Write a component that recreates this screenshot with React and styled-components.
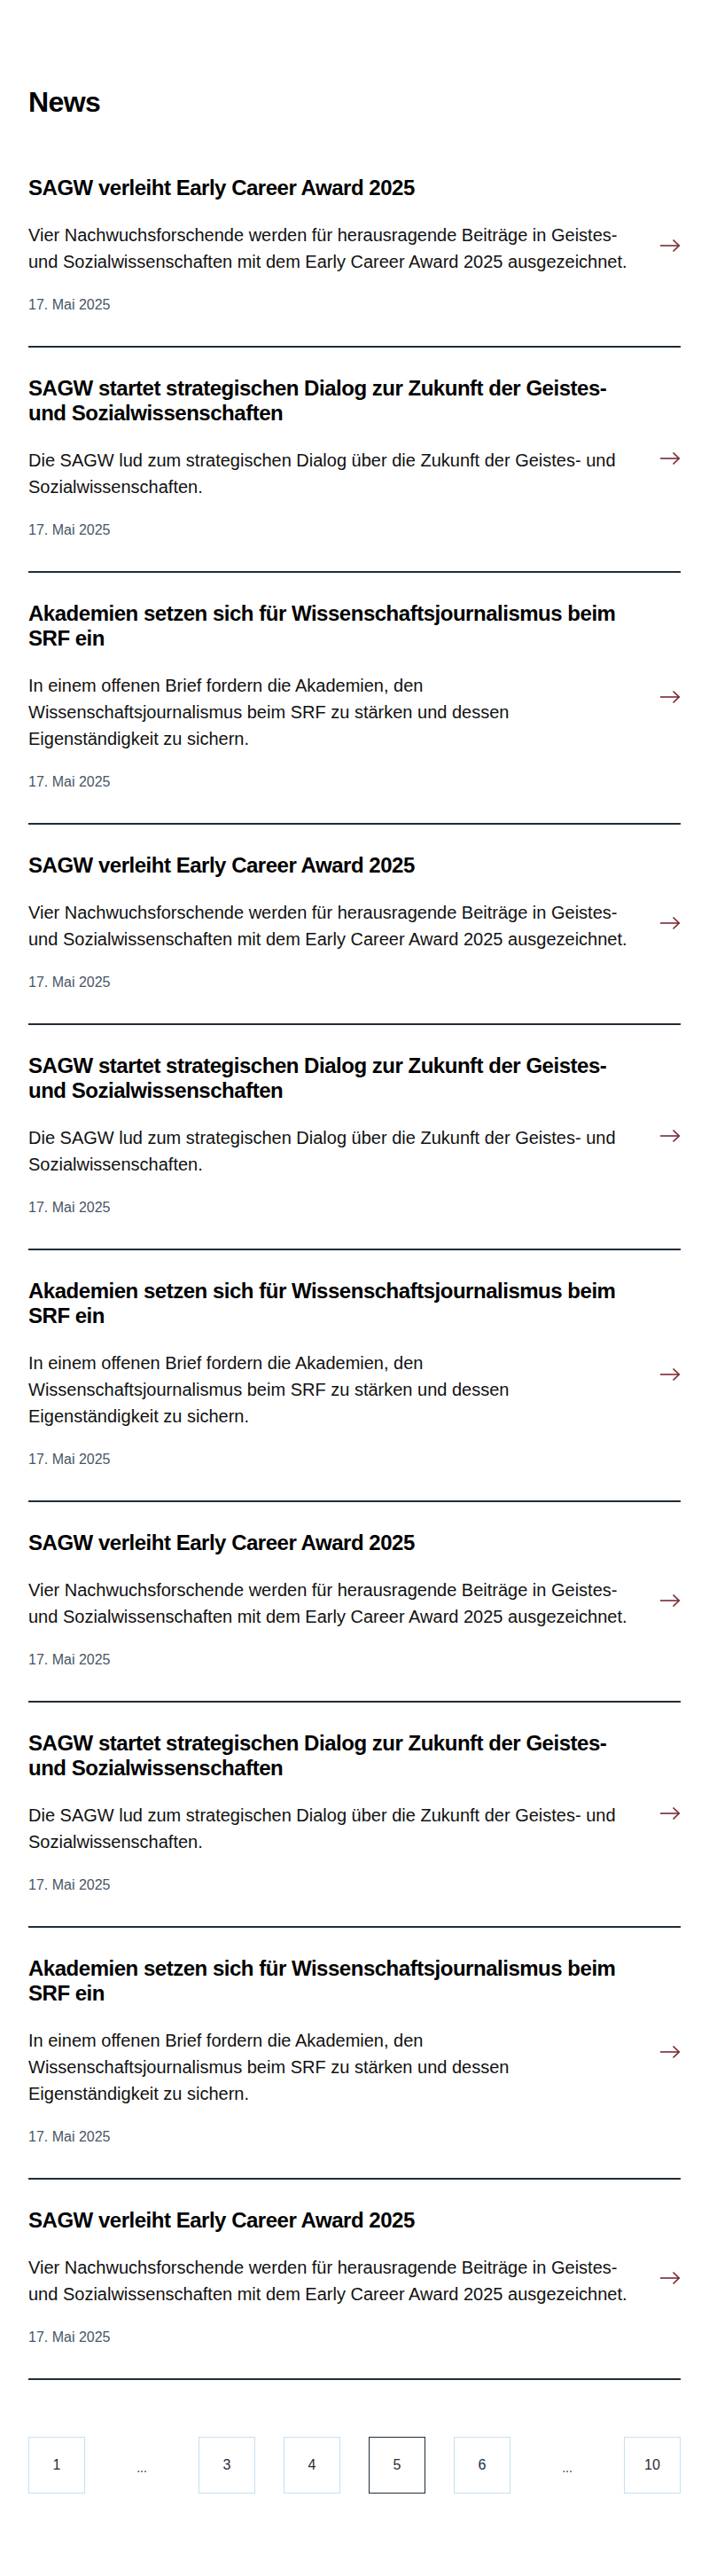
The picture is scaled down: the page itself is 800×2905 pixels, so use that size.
import React from "react";
import styled, { createGlobalStyle } from "styled-components";

const Global = createGlobalStyle`
  html, body { margin: 0; padding: 0; background: #fff; }
  body { font-family: "Liberation Sans", Arial, sans-serif; color: #111; }
  * { box-sizing: border-box; }
`;

const Page = styled.main`
  padding: 96px 32px 96px;
`;

const Heading = styled.h1`
  margin: 0 0 32px;
  font-size: 32px;
  line-height: 1.2;
  font-weight: 700;
  letter-spacing: -0.02em;
  color: #000;
`;

const List = styled.ul`
  list-style: none;
  margin: 0;
  padding: 0;
`;

const Item = styled.li`
  display: flex;
  align-items: center;
  gap: 32px;
  padding: 32px 0 34px;
  border-bottom: 2px solid #1f2d3a;
`;

const Content = styled.div`
  flex: 1;
  min-width: 0;
  display: flex;
  flex-direction: column;
`;

const Title = styled.h2`
  margin: 0 0 24px;
  font-size: 24px;
  line-height: 28px;
  font-weight: 700;
  letter-spacing: -0.02em;
  color: #000;
`;

const Teaser = styled.p`
  margin: 0 0 22px;
  font-size: 20px;
  line-height: 30px;
  color: #111;
`;

const DateText = styled.time`
  font-size: 16px;
  line-height: 24px;
  color: #4a5565;
`;

const ArrowBox = styled.span`
  flex: 0 0 24px;
  width: 24px;
  height: 16px;
  display: flex;
  align-items: center;
  color: #7a2832;
`;

const Pagination = styled.nav`
  margin-top: 64px;
  display: flex;
  gap: 32px;
`;

const PageBox = styled.span`
  width: 64px;
  height: 64px;
  display: flex;
  align-items: center;
  justify-content: center;
  font-size: 16px;
  color: #1f2d3a;
  border: 1px solid ${(p) => (p.$active ? "#1f2d3a" : "#c6e0ef")};
`;

const Dots = styled.span`
  width: 64px;
  height: 64px;
  display: flex;
  align-items: center;
  justify-content: center;
  font-size: 14px;
  color: #1f2d3a;
  padding-top: 6px;
`;

const Arrow = () => (
  <svg width="24" height="16" viewBox="0 0 24 16" fill="none" stroke="currentColor" strokeWidth="1.6">
    <path d="M1 8h21.5" />
    <path d="M15.5 1.5 22.2 8l-6.7 6.5" />
  </svg>
);

const items = [
  {
    title: "SAGW verleiht Early Career Award 2025",
    text: "Vier Nachwuchsforschende werden für herausragende Beiträge in Geistes- und Sozialwissenschaften mit dem Early Career Award 2025 ausgezeichnet.",
  },
  {
    title: "SAGW startet strategischen Dialog zur Zukunft der Geistes- und Sozialwissenschaften",
    text: "Die SAGW lud zum strategischen Dialog über die Zukunft der Geistes- und Sozialwissenschaften.",
  },
  {
    title: "Akademien setzen sich für Wissenschaftsjournalismus beim SRF ein",
    text: "In einem offenen Brief fordern die Akademien, den Wissenschaftsjournalismus beim SRF zu stärken und dessen Eigenständigkeit zu sichern.",
  },
];

const news = [0, 1, 2, 0, 1, 2, 0, 1, 2, 0].map((i) => items[i]);

const pages = ["1", "...", "3", "4", "5", "6", "...", "10"];

export default function App() {
  return (
    <>
      <Global />
      <Page>
        <Heading>News</Heading>
        <List>
          {news.map((n, i) => (
            <Item key={i}>
              <Content>
                <Title>{n.title}</Title>
                <Teaser>{n.text}</Teaser>
                <DateText>17. Mai 2025</DateText>
              </Content>
              <ArrowBox>
                <Arrow />
              </ArrowBox>
            </Item>
          ))}
        </List>
        <Pagination>
          {pages.map((p, i) =>
            p === "..." ? (
              <Dots key={i}>...</Dots>
            ) : (
              <PageBox key={i} $active={p === "5"}>
                {p}
              </PageBox>
            )
          )}
        </Pagination>
      </Page>
    </>
  );
}
